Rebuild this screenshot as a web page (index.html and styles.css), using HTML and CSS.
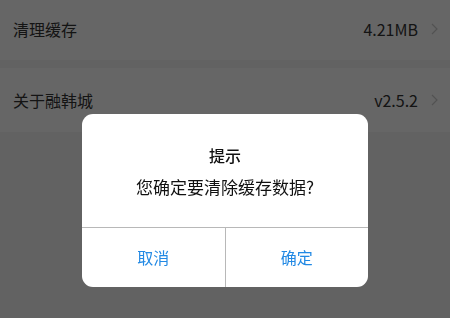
FILE: index.html
```html
<!DOCTYPE html>
<html lang="zh-CN">
<head>
<meta charset="utf-8">
<title>设置</title>
<link rel="stylesheet" href="styles.css">
</head>
<body>
<div class="list">
  <div class="row">
    <span class="label">清理缓存</span>
    <span class="value">4.21MB</span>
    <svg class="chev" width="7" height="12" viewBox="0 0 7 12"><path d="M1 1 L6 6 L1 11" fill="none" stroke="#cccccc" stroke-width="1.2"/></svg>
  </div>
  <div class="row">
    <span class="label">关于融韩城</span>
    <span class="value">v2.5.2</span>
    <svg class="chev" width="7" height="12" viewBox="0 0 7 12"><path d="M1 1 L6 6 L1 11" fill="none" stroke="#cccccc" stroke-width="1.2"/></svg>
  </div>
</div>
<div class="mask">
  <div class="dialog">
    <div class="dialog-body">
      <div class="dialog-title">提示</div>
      <div class="dialog-msg">您确定要清除缓存数据?</div>
    </div>
    <div class="dialog-actions">
      <div class="btn">取消</div>
      <div class="btn">确定</div>
    </div>
  </div>
</div>
</body>
</html>
```
FILE: styles.css
```css
* { box-sizing: border-box; }
html, body {
  margin: 0;
  padding: 0;
  width: 450px;
  height: 318px;
  overflow: hidden;
  background: #f5f5f5;
  font-family: "Noto Sans CJK SC", "Noto Sans", sans-serif;
}
.list {
  margin-top: -2px;
  display: flex;
  flex-direction: column;
  gap: 8px;
}
.row {
  height: 62px;
  background: #ffffff;
  display: flex;
  align-items: center;
  padding: 0 12px 0 13px;
  font-size: 16px;
  color: #333333;
}
.label { flex: 1; }
.value { color: #333333; margin-right: 13px; }
.chev { display: block; }
.row:last-child { height: 64px; }
.mask {
  position: fixed;
  inset: 0;
  background: rgba(0, 0, 0, 0.6);
}
.dialog {
  width: 286px;
  height: 173px;
  margin: 114px auto 0;
  background: #ffffff;
  border-radius: 11px;
  overflow: hidden;
  display: flex;
  flex-direction: column;
}
.dialog-body {
  height: 114px;
  padding-top: 31px;
  display: flex;
  flex-direction: column;
  align-items: center;
  gap: 12px;
  border-bottom: 1px solid #b8b8b8;
}
.dialog-title {
  font-size: 16px;
  line-height: 20px;
  color: #111111;
  font-weight: 500;
}
.dialog-msg {
  font-size: 17px;
  line-height: 20px;
  color: #111111;
}
.dialog-actions {
  flex: 1;
  display: flex;
}
.btn {
  flex: 1;
  display: flex;
  align-items: center;
  justify-content: center;
  font-size: 16px;
  color: #2289e4;
  padding-bottom: 2px;
}
.btn + .btn { border-left: 1px solid #b8b8b8; }
```
